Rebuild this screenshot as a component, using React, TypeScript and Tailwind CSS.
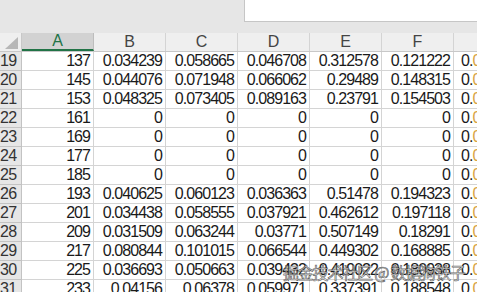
import React from 'react';

const cols = ['A', 'B', 'C', 'D', 'E', 'F'];

const rows: [number, string[]][] = [
  [19, ['137', '0.034239', '0.058665', '0.046708', '0.312578', '0.121222']],
  [20, ['145', '0.044076', '0.071948', '0.066062', '0.29489', '0.148315']],
  [21, ['153', '0.048325', '0.073405', '0.089163', '0.23791', '0.154503']],
  [22, ['161', '0', '0', '0', '0', '0']],
  [23, ['169', '0', '0', '0', '0', '0']],
  [24, ['177', '0', '0', '0', '0', '0']],
  [25, ['185', '0', '0', '0', '0', '0']],
  [26, ['193', '0.040625', '0.060123', '0.036363', '0.51478', '0.194323']],
  [27, ['201', '0.034438', '0.058555', '0.037921', '0.462612', '0.197118']],
  [28, ['209', '0.031509', '0.063244', '0.03771', '0.507149', '0.18291']],
  [29, ['217', '0.080844', '0.101015', '0.066544', '0.449302', '0.168885']],
  [30, ['225', '0.036693', '0.050663', '0.039432', '0.419022', '0.180938']],
  [31, ['233', '0.04156', '0.06378', '0.059971', '0.337391', '0.188548']],
];

const font = { fontFamily: '"Liberation Sans", "Noto Sans CJK SC", sans-serif' };

export default function App() {
  return (
    <div className="w-[477px] h-[292px] overflow-hidden bg-white relative text-[16px] text-[#1a1a1a]" style={font}>
      {/* top bar */}
      <div className="h-[33px] bg-[#e6e6e6] flex">
        <div className="w-[244px]" />
        <div className="flex-1 h-[22px] bg-white border-l border-b border-[#c6c6c6]" />
      </div>

      {/* column headers */}
      <div className="flex h-[19px] bg-[#efefef] border-b border-[#c8c8c8]">
        <div className="w-[22px] shrink-0 border-r border-[#c8c8c8] flex items-end justify-end pr-[3px] pb-[2px]">
          <div className="w-0 h-0 border-l-[13px] border-l-transparent border-b-[12px] border-b-[#b7b7b7]" />
        </div>
        {cols.map((c) => (
          <div
            key={c}
            className={
              c === 'A'
                ? 'w-[72px] shrink-0 bg-[#d2d2d2] border-r border-[#bdbdbd] border-b-2 border-b-[#217346] text-[#217346] flex items-center justify-center leading-none'
                : 'w-[72px] shrink-0 border-r border-[#d4d4d4] text-[#444] flex items-center justify-center leading-none'
            }
          >
            {c}
          </div>
        ))}
        <div className="flex-1" />
      </div>

      {/* rows */}
      {rows.map(([n, vals]) => (
        <div key={n} className="flex h-[19px]">
          <div className="w-[22px] shrink-0 bg-[#e6e6e6] border-r border-b border-[#c3c3c3] text-[#333] flex items-center leading-none tracking-[-0.6px]">
            {n}
          </div>
          {vals.map((v, i) => (
            <div
              key={i}
              className="w-[72px] shrink-0 border-r border-b border-[#d4d4d4] flex items-center justify-end pr-[3px] leading-none tracking-[-0.95px]"
            >
              {v}
            </div>
          ))}
          <div className="flex-1 border-b border-[#d4d4d4] flex items-center pl-[7px] leading-none whitespace-nowrap overflow-hidden tracking-[-0.95px]">
            0.<span className="text-[#d9a441]">0</span>
          </div>
        </div>
      ))}

      {/* watermark */}
      <div
        className="absolute left-[283px] top-[260px] text-[16px] text-white/85 whitespace-nowrap tracking-[-1.2px]"
        style={{ fontFamily: '"Noto Sans CJK SC", sans-serif', WebkitTextStroke: '0.7px rgba(50,50,50,0.75)' }}
      >
        掘金技术社区 @ 数据狗铁子
      </div>
    </div>
  );
}
